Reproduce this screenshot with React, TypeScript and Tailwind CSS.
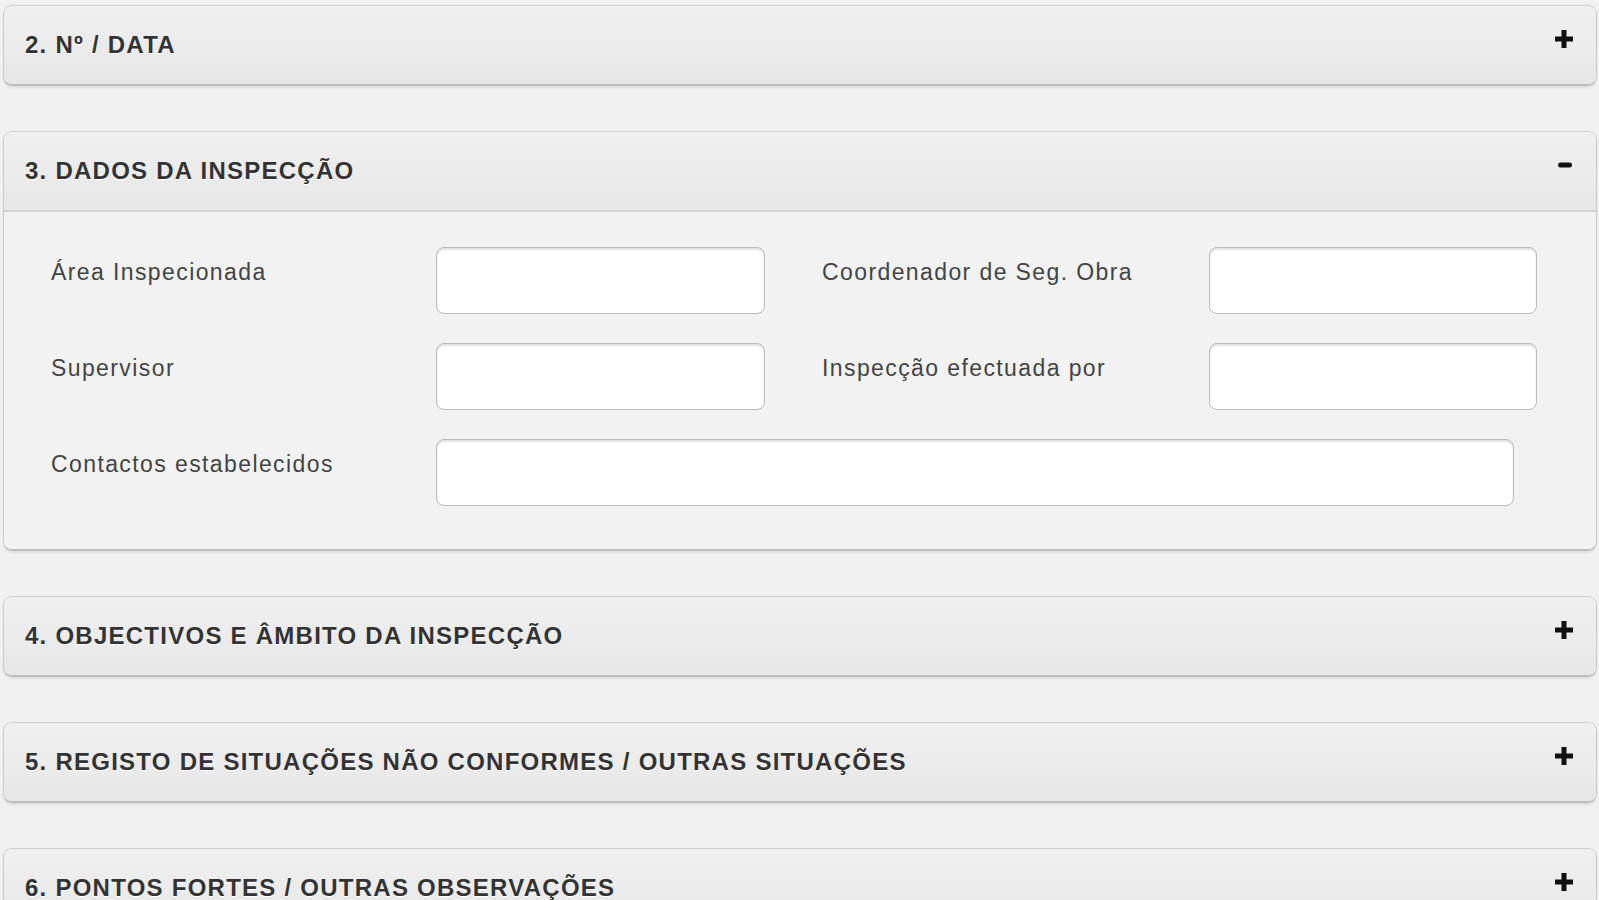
const font = { fontFamily: '"Liberation Sans", Arial, sans-serif' };

const PlusIcon = () => (
  <svg width="22" height="22" viewBox="0 0 22 22" className="text-[#111]">
    <path d="M11 2v18M2 11h18" stroke="currentColor" strokeWidth="5" />
  </svg>
);

const MinusIcon = () => (
  <svg width="14" height="8" viewBox="0 0 14 8" className="text-[#111]">
    <path d="M2.5 4h9" stroke="currentColor" strokeWidth="5" strokeLinecap="round" />
  </svg>
);

const PanelHeader = ({ title, open }: { title: string; open?: boolean }) => (
  <div
    className={
      "flex items-center justify-between pl-[21px] bg-gradient-to-b from-[#f0f0f0] to-[#e7e7e7] " +
      (open ? "h-[80px] border-b-[2px] border-[#d4d4d4] pr-[24px]" : "h-[78px] pr-[21px]")
    }
  >
    <span className="text-[24px] font-bold tracking-[1.25px] text-[#333] [text-shadow:0_1px_0_#fff]">{title}</span>
    <span className="-mt-[12px]">{open ? <MinusIcon /> : <PlusIcon />}</span>
  </div>
);

const Panel = ({ title, open, children }: { title: string; open?: boolean; children?: React.ReactNode }) => (
  <div className="rounded-[9px] border border-[#cbcbcb] border-b-[2px] border-b-[#bdbdbd] overflow-hidden shadow-[0_2px_2px_rgba(0,0,0,0.08)]">
    <PanelHeader title={title} open={open} />
    {children}
  </div>
);

const Label = ({ text, w }: { text: string; w: string }) => (
  <div className={w + " text-[23px] tracking-[1.4px] text-[#444] pt-[8px] shrink-0"}>{text}</div>
);

const Field = ({ w }: { w: string }) => (
  <input
    type="text"
    className={
      w +
      " h-[67px] shrink-0 bg-white border-[1.5px] border-[#bcbcbc] rounded-[8px] shadow-[inset_0_2px_2px_rgba(0,0,0,0.12)] outline-none"
    }
  />
);

export default function App() {
  return (
    <div className="min-h-[900px] bg-[#f1f1f1] pt-[5px] pl-[3px] pr-[2px] overflow-hidden" style={font}>
      <div className="flex flex-col gap-[45px]">
        <Panel title="2. Nº / DATA" />
        <Panel title="3. DADOS DA INSPECÇÃO" open>
          <div className="bg-[#f2f2f2] pl-[47px] pt-[35px] pb-[43px] flex flex-col gap-[29px]">
            <div className="flex">
              <Label text="Área Inspecionada" w="w-[385px]" />
              <Field w="w-[329px]" />
              <div className="w-[57px]" />
              <Label text="Coordenador de Seg. Obra" w="w-[387px]" />
              <Field w="w-[328px]" />
            </div>
            <div className="flex">
              <Label text="Supervisor" w="w-[385px]" />
              <Field w="w-[329px]" />
              <div className="w-[57px]" />
              <Label text="Inspecção efectuada por" w="w-[387px]" />
              <Field w="w-[328px]" />
            </div>
            <div className="flex">
              <Label text="Contactos estabelecidos" w="w-[385px]" />
              <Field w="w-[1078px]" />
            </div>
          </div>
        </Panel>
        <Panel title="4. OBJECTIVOS E ÂMBITO DA INSPECÇÃO" />
        <Panel title="5. REGISTO DE SITUAÇÕES NÃO CONFORMES / OUTRAS SITUAÇÕES" />
        <Panel title="6. PONTOS FORTES / OUTRAS OBSERVAÇÕES" />
      </div>
    </div>
  );
}
